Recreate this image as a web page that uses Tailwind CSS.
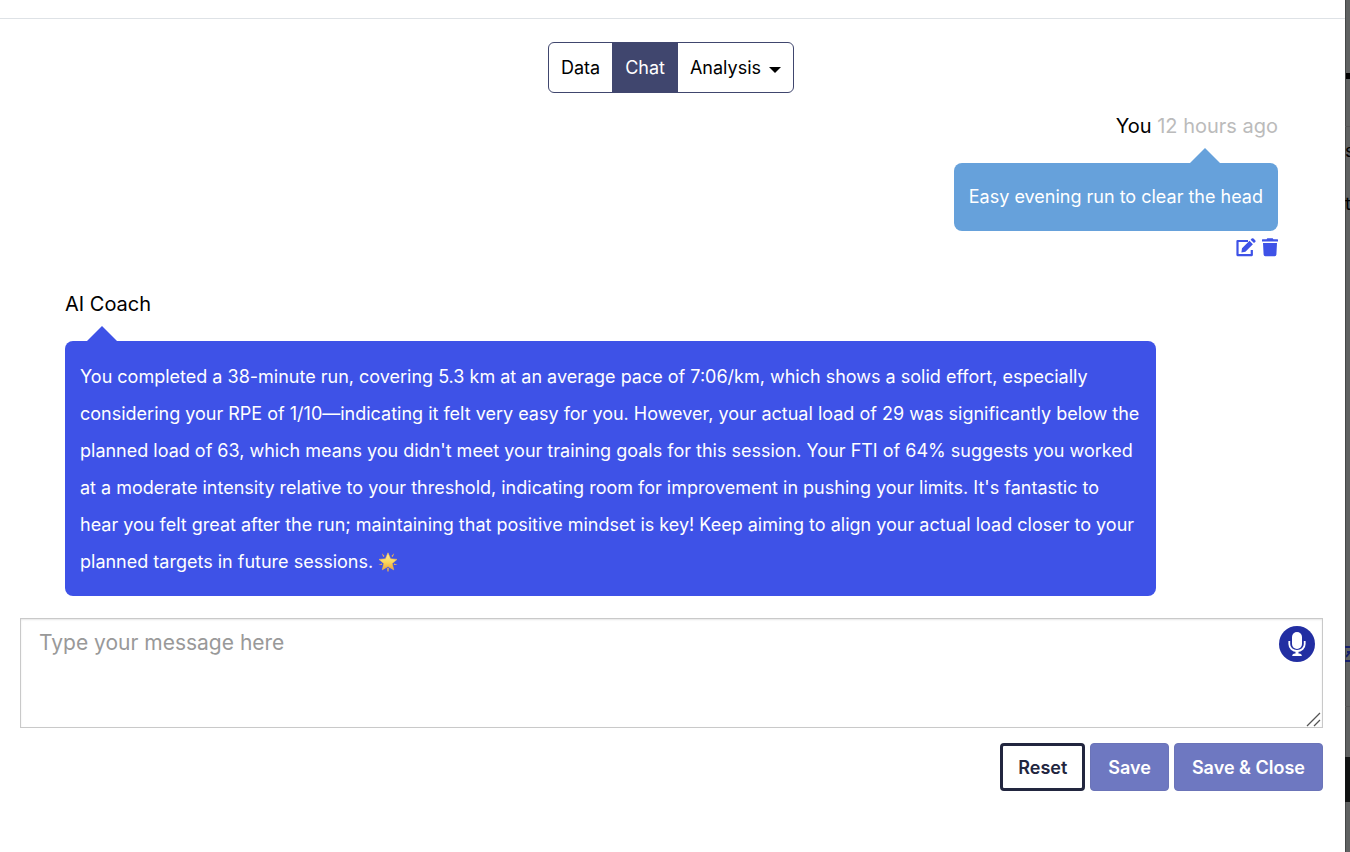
<!DOCTYPE html>
<html lang="en">
<head>
    <meta charset="UTF-8">
    <meta name="viewport" content="width=device-width, initial-scale=1.0">
    <title>Workout - AI Coach</title>
    <script src="https://cdn.jsdelivr.net/npm/@tailwindcss/browser@4"></script>
</head>
<body class="flex min-h-screen bg-[#606262] font-['Inter',sans-serif] text-lg text-black">
    <!-- Workout dialog -->
    <main class="min-w-0 flex-1 bg-white">
        <div class="h-[19px] border-b border-[#dee2e6]"></div>

        <nav class="mt-[23px] flex justify-center pr-[3px]">
            <div class="flex h-[51px] overflow-hidden rounded-md border border-[#40466e]">
                <button class="px-3">Data</button>
                <button class="bg-[#40466e] px-[13px] text-white">Chat</button>
                <button class="flex items-center gap-2 px-3">
                    Analysis
                    <span class="mt-1 border-x-6 border-t-6 border-x-transparent border-t-black"></span>
                </button>
            </div>
        </nav>

        <!-- Messages -->
        <section class="pt-[18px] pr-[67px] pl-[65px]">
            <article class="flex flex-col items-end">
                <p class="text-xl leading-[30px]">You <span class="text-[#bbb]">12 hours ago</span></p>
                <div class="relative mt-[22px] rounded-lg bg-[#66a1db] px-[15px] py-[15px] leading-[38px] text-white">
                    <span class="absolute -top-[15px] right-[58px] border-x-15 border-b-15 border-x-transparent border-b-[#66a1db]"></span>
                    Easy evening run to clear the head
                </div>
                <div class="mt-[7px] flex gap-[6px] text-[#3e52e7]">
                    <button aria-label="Edit message">
                        <svg class="h-5 w-5" viewBox="0 0 20 20" fill="none">
                            <path d="M12 3H1.500V17.100H15.800V12" stroke="currentColor" stroke-width="2.200" stroke-linejoin="round"/>
                            <path d="M6 10.300 13.500 2.800 16.900 6.200 9.400 13.700 5.400 14.400ZM14.600 1.700 15.700.6Q16.600-.2 17.500.6L19.200 2.300Q20 3.200 19.200 4L18 5.100Z" fill="currentColor"/>
                        </svg>
                    </button>
                    <button aria-label="Delete message">
                        <svg class="h-5 w-4" viewBox="0 0 16 20" fill="currentColor">
                            <path d="M.5 1.300H4.600L5.300.3H10.700L11.400 1.300H15.500Q16 1.300 16 1.800V3.600H0V1.800Q0 1.300.5 1.300ZM1 4.900H15L14.400 16.600Q14.300 18.200 12.700 18.200H3.300Q1.700 18.200 1.600 16.600Z"/>
                        </svg>
                    </button>
                </div>
            </article>

            <article class="mt-[31px] flex flex-col items-start">
                <p class="text-xl leading-[30px]">AI Coach</p>
                <div class="relative mt-[22px] max-w-[1091px] rounded-lg bg-[#3e52e7] px-[15px] pt-[17px] pb-4 leading-[37px] text-white">
                    <span class="absolute -top-[15px] left-[22px] border-x-15 border-b-15 border-x-transparent border-b-[#3e52e7]"></span>
                    You completed a 38-minute run, covering 5.3 km at an average pace of 7:06/km, which shows a solid effort, especially considering your RPE of 1/10—indicating it felt very easy for you. However, your actual load of 29 was significantly below the planned load of 63, which means you didn't meet your training goals for this session. Your FTI of 64% suggests you worked at a moderate intensity relative to your threshold, indicating room for improvement in pushing your limits. It's fantastic to hear you felt great after the run; maintaining that positive mindset is key! Keep aiming to align your actual load closer to your planned targets in future sessions.
                    <svg class="inline h-5 w-5 align-[-4px]" viewBox="0 0 20 20" role="img" aria-label="glowing star">
                        <defs>
                            <linearGradient id="star" x1="0" y1="0" x2="0" y2="1">
                                <stop offset="0" stop-color="#fff0a0"/>
                                <stop offset=".55" stop-color="#fbd75b"/>
                                <stop offset="1" stop-color="#eda23a"/>
                            </linearGradient>
                        </defs>
                        <path d="M3.800 1.200 6.600 4 5.200 5ZM16.200 1.200 13.400 4 14.800 5ZM.4 12.800 4 11.400 4.200 13ZM19.600 12.800 16 11.400 15.800 13ZM9.200 16H10.800L10.600 19.600H9.400Z" fill="#efb04c"/>
                        <path d="M10 .8 12.600 6.800 19 7.400 14.200 11.600 15.700 17.800 10 14.500 4.300 17.800 5.800 11.600 1 7.400 7.400 6.800Z" fill="url(#star)" stroke="#f3bd4c" stroke-width=".6" stroke-linejoin="round"/>
                    </svg>
                </div>
            </article>
        </section>

        <!-- New message -->
        <form class="mt-[22px] pr-[22px] pl-5">
            <div class="relative">
                <textarea aria-label="Message" placeholder="Type your message here" class="block h-[110px] w-full resize-none border border-[#c9c9c9] px-[18px] py-2 text-[21px] leading-8 inset-shadow-[0_1px_2px_#0000001a] placeholder:text-[#999]"></textarea>
                <button type="button" aria-label="Record message" class="absolute top-2 right-2 h-9 w-9 rounded-full bg-[#222ea2]">
                    <svg class="h-9 w-9" viewBox="0 0 36 36" fill="none" stroke="#fff">
                        <rect x="13" y="6" width="10" height="17" rx="5" fill="#fff" stroke="none"/>
                        <path d="M10.300 15V18C10.300 22 13.500 25 18 25S25.700 22 25.700 18V15" stroke-width="1.800"/>
                        <path d="M18 25V28" stroke-width="3"/>
                        <path d="M13.200 30Q13.200 27.500 16 27.500H20Q22.800 27.500 22.800 30Z" fill="#fff" stroke="none"/>
                    </svg>
                </button>
                <svg class="pointer-events-none absolute right-[2px] bottom-[1px] h-[15px] w-[15px]" viewBox="0 0 15 15" stroke="#555" stroke-width="1.300">
                    <path d="M1 14 14 1M8 14 14 8"/>
                </svg>
            </div>
            <div class="mt-[15px] flex justify-end gap-[5px] font-semibold">
                <button type="reset" class="h-12 rounded-sm border-3 border-[#22263f] px-[15px] pt-0.5 text-[#22263f]">Reset</button>
                <button type="button" class="h-12 rounded-sm border border-[#6b74b8] bg-[#6e78c1] px-[17px] pt-0.5 text-white">Save</button>
                <button type="button" class="h-12 rounded-sm border border-[#6b74b8] bg-[#6e78c1] px-[17px] pt-0.5 text-white">Save &amp; Close</button>
            </div>
        </form>
    </main>

    <!-- Edge of the dimmed page behind the dialog -->
    <aside class="w-[5px] overflow-hidden inset-shadow-[1px_0_0_#454747]" aria-hidden="true">
        <div class="mt-[73px] ml-px h-[6px] bg-black"></div>
        <div class="mt-[47px] h-px bg-[#555]"></div>
        <p class="mt-3 leading-6">s</p>
        <p class="mt-[29px] leading-6">t</p>
        <div class="mt-[430px] h-4 border-y-2 border-[#17206b]">
            <svg class="ml-px h-3 w-1" viewBox="0 0 4 12" fill="none" stroke="#17206b" stroke-width="2">
                <path d="M0 9 4 4M1 4H4"/>
            </svg>
        </div>
        <div class="mt-11 h-px bg-[#555]"></div>
        <div class="mt-[50px] h-[45px] bg-[#111313]"></div>
    </aside>
</body>
</html>
